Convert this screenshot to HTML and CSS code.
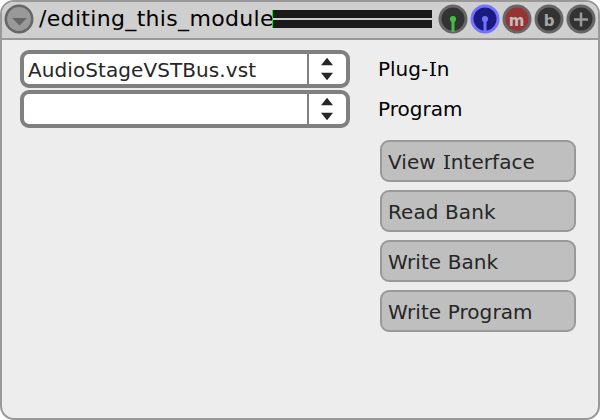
FILE: index.html
```html
<!DOCTYPE html>
<html lang="en">
<head>
<meta charset="utf-8">
<title>/editing_this_module</title>
<link rel="stylesheet" href="styles.css">
</head>
<body>
<main class="module">
  <header class="bar">
    <svg class="knob" viewBox="0 0 30 30"><circle cx="15" cy="15" r="13.2" fill="#999" stroke="#666" stroke-width="2.6"/><path d="M8 14H23L15.5 21.5Z" fill="#666"/></svg>
    <h1 class="title">/editing_this_module</h1>
    <div class="meter"><i></i><i></i></div>
    <div class="controls">
      <svg class="knob" viewBox="0 0 30 30"><circle cx="15" cy="15" r="13" fill="#333" stroke="#666" stroke-width="3"/><path d="M15 15V28" stroke="#40bf40" stroke-width="3"/><circle cx="15" cy="15" r="3.1" fill="#40bf40"/></svg>
      <svg class="knob" viewBox="0 0 30 30"><circle cx="15" cy="15" r="13" fill="#1a1a80" stroke="#7373ff" stroke-width="3"/><path d="M15 15V28" stroke="#7373ff" stroke-width="3"/><circle cx="15" cy="15" r="3.1" fill="#7373ff"/></svg>
      <svg class="knob" viewBox="0 0 30 30"><circle cx="15" cy="15" r="13" fill="#993333" stroke="#666" stroke-width="3"/><text class="mute" x="14.6" y="21.7">m</text></svg>
      <svg class="knob" viewBox="0 0 30 30"><circle cx="15" cy="15" r="13" fill="#333" stroke="#666" stroke-width="3"/><text x="15" y="22">b</text></svg>
      <svg class="knob" viewBox="0 0 30 30"><circle cx="15" cy="15" r="13" fill="#333" stroke="#666" stroke-width="3"/><path d="M8 15.5H22M15 8.5V22.5" stroke="#999" stroke-width="2.5"/></svg>
    </div>
  </header>
  <section class="content">
    <div class="selects">
      <div class="select"><span class="value">AudioStageVSTBus.vst</span><svg class="arrows" viewBox="0 0 37 30"><path d="M12 11.3L18 3.7L24 11.3ZM12 18.7L18 26.3L24 18.7Z" fill="#262626"/></svg></div>
      <div class="select"><span class="value"></span><svg class="arrows" viewBox="0 0 37 30"><path d="M12 11.3L18 3.7L24 11.3ZM12 18.7L18 26.3L24 18.7Z" fill="#262626"/></svg></div>
    </div>
    <div class="side">
      <div class="label">Plug-<span class="slab">I</span>n</div>
      <div class="label">Program</div>
      <div class="buttons">
        <button class="button">View <span class="slab">I</span>nterface</button>
        <button class="button">Read Bank</button>
        <button class="button">Write Bank</button>
        <button class="button">Write Program</button>
      </div>
    </div>
  </section>
</main>
</body>
</html>
```
FILE: styles.css
```css
* {
  box-sizing: border-box;
}

body {
  margin: 0;
  background: #fff;
  font-family: Verdana, "DejaVu Sans", sans-serif;
  font-size: 20px;
  color: #000;
}

.module {
  width: 600px;
  height: 420px;
  border: 2px solid #999;
  border-radius: 14px;
  background: #ededed;
  overflow: hidden;
}

.bar {
  display: flex;
  height: 38px;
  padding-left: 2px;
  border-bottom: 2px solid #999;
  background: #cfcfcf;
}

.knob {
  width: 30px;
  height: 30px;
  margin-top: 2px;
  flex: none;
}

.knob text {
  font: bold 15px "DejaVu Sans", sans-serif;
  fill: #a6a6a6;
  text-anchor: middle;
}

.knob .mute {
  fill: #bfbfbf;
}

.title {
  width: 238px;
  margin: 0;
  padding-left: 5px;
  font-size: 22px;
  font-weight: normal;
  line-height: 34px;
  letter-spacing: 0.33px;
  white-space: nowrap;
}

.meter {
  display: flex;
  flex-direction: column;
  gap: 2px;
  width: 160px;
  height: 18px;
  margin-top: 8px;
}

.meter i {
  height: 8px;
  border-left: 1px solid #0f0;
  background: #1a1a1a;
}

.controls {
  display: flex;
  gap: 2px;
  margin-left: 6px;
}

.content {
  display: flex;
  padding: 10px 0 0 18px;
}

.selects {
  display: flex;
  flex-direction: column;
  gap: 2px;
  width: 330px;
}

.select {
  display: flex;
  height: 38px;
  border: 4px solid #808080;
  border-radius: 9px;
  background: #fff;
  color: #262626;
}

.value {
  width: 285px;
  padding-left: 4px;
  border-right: 2px solid #808080;
  line-height: 33px;
  letter-spacing: 0.08px;
  white-space: nowrap;
}

.arrows {
  width: 37px;
  height: 30px;
}

.side {
  margin-left: 28px;
}

.label {
  height: 40px;
  line-height: 39px;
}

/* Capital I with top and bottom serifs */
.slab {
  position: relative;
  padding: 0 1px 0 1.5px;
}

.slab::before,
.slab::after {
  content: "";
  position: absolute;
  left: 1.5px;
  width: 6px;
  height: 1.5px;
  background: currentColor;
}

.slab::before {
  top: 4.5px;
}

.slab::after {
  top: 17.5px;
}

.buttons {
  display: flex;
  flex-direction: column;
  gap: 8px;
  margin: 10px 0 0 2px;
}

.button {
  width: 196px;
  height: 42px;
  padding: 2px 0 0 6px;
  border: 2px solid #999;
  border-radius: 9px;
  background: #bfbfbf;
  color: #262626;
  font: inherit;
  line-height: 36px;
  letter-spacing: 0.08px;
  text-align: left;
  white-space: nowrap;
}
```
